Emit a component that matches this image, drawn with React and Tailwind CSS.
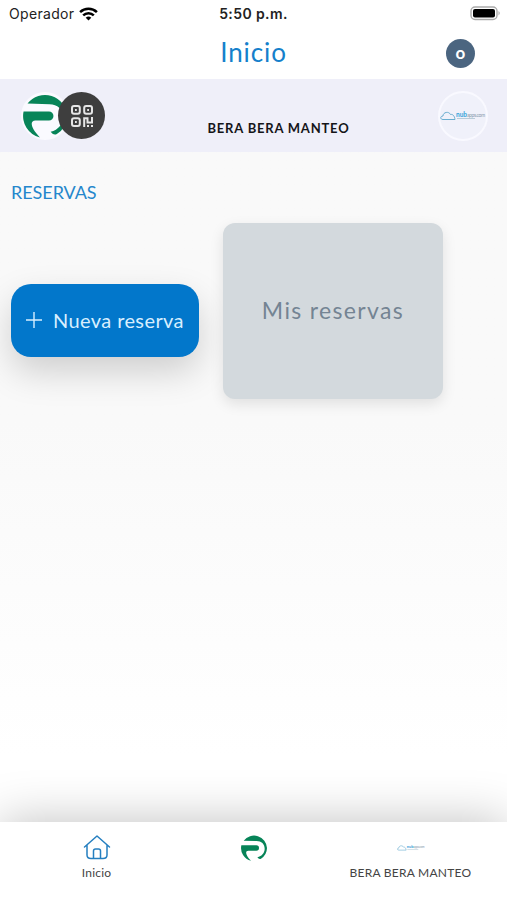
const logoTop = "M8 17A39 39 0 0 1 78 39A39 39 0 0 1 60 71Q54 74 49 67C63 63 71 53 71 41C71 27 61 18 47 18Z";
const logoBar = "M1 31H46A8 8 0 0 1 46 47H22C11 47 14 61 30 77A39 39 0 0 1 1 31Z";

function Logo({ className }) {
  return (
    <svg viewBox="0 0 78 78" className={className} fill="#078458">
      <path d={logoTop} />
      <path d={logoBar} />
    </svg>
  );
}

function CloudLogo({ className }) {
  return (
    <svg viewBox="0 0 46 12" className={className} fill="none">
      <path d="M3 9.5C0 9.5 0 6 3 6C3 2 9 1 10.5 4.5C13 4 14.500 6 15 9.500Z" stroke="#6aaed0" strokeWidth="1" />
      <text x="16" y="6.800" fontSize="6.500" fontWeight="900" fontFamily="Lato, sans-serif" fill="#45a8dc" textLength="11">nub</text>
      <text x="27" y="6.800" fontSize="5" fontFamily="Lato, sans-serif" fill="#8799ac" textLength="18">apps.com</text>
      <path d="M17 8.500H35" stroke="#b7cbd8" strokeWidth="1" />
    </svg>
  );
}

function Qr() {
  return (
    <svg viewBox="0 0 24 24" className="size-6" fill="none" stroke="#e6e6e6" strokeWidth="2">
      <rect x="2" y="2" width="7.800" height="7.800" rx="2" />
      <rect x="14.200" y="2" width="7.800" height="7.800" rx="2" />
      <rect x="2" y="14.200" width="7.800" height="7.800" rx="2" />
      <path d="M5 5.900h1.800M17.200 5.900h1.800M5 18.100h1.800M14.200 23V14.200h3.300v4.300h4.500v-5.500M17 22h2M21 22h2" />
    </svg>
  );
}

export default function App() {
  return (
    <div className="flex h-[900px] w-[507px] flex-col overflow-hidden bg-white font-['Lato',sans-serif]">
      <div className="grid h-[27px] shrink-0 grid-cols-3 items-center font-['Inter',sans-serif] text-[14px] leading-none text-[#222]">
        <div className="flex items-center gap-[5px] pl-[9px]">
          <span className="tracking-[0.32px]">Operador</span>
          <svg viewBox="0 0 20 15" className="h-[14px] w-[19px]" fill="none" stroke="#000" strokeWidth="2.700">
            <path d="M1 5.500C6 .7 14 .7 19 5.500M4.300 9C7.500 5.900 12.500 5.900 15.700 9" />
            <path d="M7 11.500Q10 8.800 13 11.500L10 14.500Z" fill="#000" stroke="none" />
          </svg>
        </div>
        <div className="text-center font-semibold tracking-[0.4px]">5:50 p.m.</div>
        <div className="flex justify-end pr-[6px]">
          <svg viewBox="0 0 31 15" className="h-[15px] w-[31px]">
            <rect x="1" y="1" width="26" height="12.500" rx="4" fill="#fff" stroke="#aaa" strokeWidth="1.400" />
            <rect x="3" y="3" width="22" height="8.500" rx="2" fill="#000" />
            <path d="M28.500 5Q31 7.200 28.500 9.500Z" fill="#aaa" />
          </svg>
        </div>
      </div>
      <div className="grid h-[52px] shrink-0 grid-cols-3 items-center">
        <span />
        <h1 className="pb-[2px] text-center text-[26px] leading-none tracking-[0.9px] text-[#1580cb]">Inicio</h1>
        <div className="flex justify-end pr-8">
          <div className="flex size-[29px] items-center justify-center rounded-full bg-[#4b6580] text-[17px] font-bold text-white">
            <span className="pb-px leading-none">o</span>
          </div>
        </div>
      </div>
      <header className="flex h-[73px] shrink-0 items-center bg-[#efeff9] pl-[21px] pr-[19px]">
        <div className="flex w-[84px] items-center">
          <div className="flex size-12 shrink-0 items-center justify-center rounded-full bg-[#fafaff]">
            <Logo className="size-11" />
          </div>
          <div className="z-10 -ml-[11px] flex size-[47px] shrink-0 items-center justify-center rounded-full bg-[#3e3e3e]">
            <Qr />
          </div>
        </div>
        <div className="flex-1 whitespace-nowrap pl-[14px] pt-[25px] text-center text-[13px] font-bold leading-none tracking-[0.8px] text-[#151519]">BERA BERA MANTEO</div>
        <div className="flex size-[50px] items-center justify-center rounded-full border-2 border-[#f9f9ff] bg-[#f0f1fa]">
          <CloudLogo className="h-3 w-[46px] shrink-0" />
        </div>
      </header>
      <main className="flex-1 bg-linear-to-b from-[#f9f9f9] from-40% to-white to-90% px-[11px] pt-[31px]">
        <h2 className="text-[18px] leading-[18px] tracking-[-0.05px] text-[#2587cc]">RESERVAS</h2>
        <div className="mt-[21.500px] flex items-center gap-6">
          <button className="mt-[19px] flex h-[73px] w-[188px] items-center rounded-[20px] bg-[#0277cb] pl-[15px] text-[#d8efff] shadow-[0_15px_35px_rgba(0,0,0,0.17)]">
            <svg viewBox="0 0 16 16" className="size-4" stroke="currentColor" strokeWidth="1.400"><path d="M8 0V16M0 8H16" /></svg>
            <span className="ml-[11px] whitespace-nowrap text-[20px] tracking-[0.4px]">Nueva reserva</span>
          </button>
          <div className="relative flex h-[176px] w-[220px] items-center justify-center rounded-[12px] bg-[#d3d9dd] pb-px text-[23px] tracking-[1.350px] text-[#748493] shadow-[0_5px_14px_rgba(0,0,0,0.1)]">Mis reservas</div>
        </div>
      </main>
      <nav className="z-10 grid h-[78px] shrink-0 grid-cols-[193px_121px_193px] bg-white pt-[13px] text-[#444] shadow-[0_0_50px_rgba(0,0,0,0.25)]">
        <div className="flex flex-col items-center">
          <svg viewBox="0 0 28 26" className="h-[26px] w-7" fill="none" stroke="#257fc0" strokeWidth="1.500" strokeLinecap="round" strokeLinejoin="round">
            <path d="M1.500 12L14 1L26.500 12M4 10V20Q4 23.500 8 23.500H20Q24 23.500 24 20V10M10.500 23.500V16Q10.500 14 12.500 14H15.500Q17.500 14 17.500 16V23.500" />
          </svg>
          <span className="mt-[5px] text-[12px] leading-[14px] tracking-[0.2px]">Inicio</span>
        </div>
        <div className="flex justify-center"><Logo className="size-[26px]" /></div>
        <div className="flex flex-col items-center">
          <div className="flex h-[26px] items-center justify-center"><CloudLogo className="h-2 w-[28px]" /></div>
          <span className="mt-[5px] whitespace-nowrap text-[12px] leading-[14px] tracking-[0.250px]">BERA BERA MANTEO</span>
        </div>
      </nav>
    </div>
  );
}
